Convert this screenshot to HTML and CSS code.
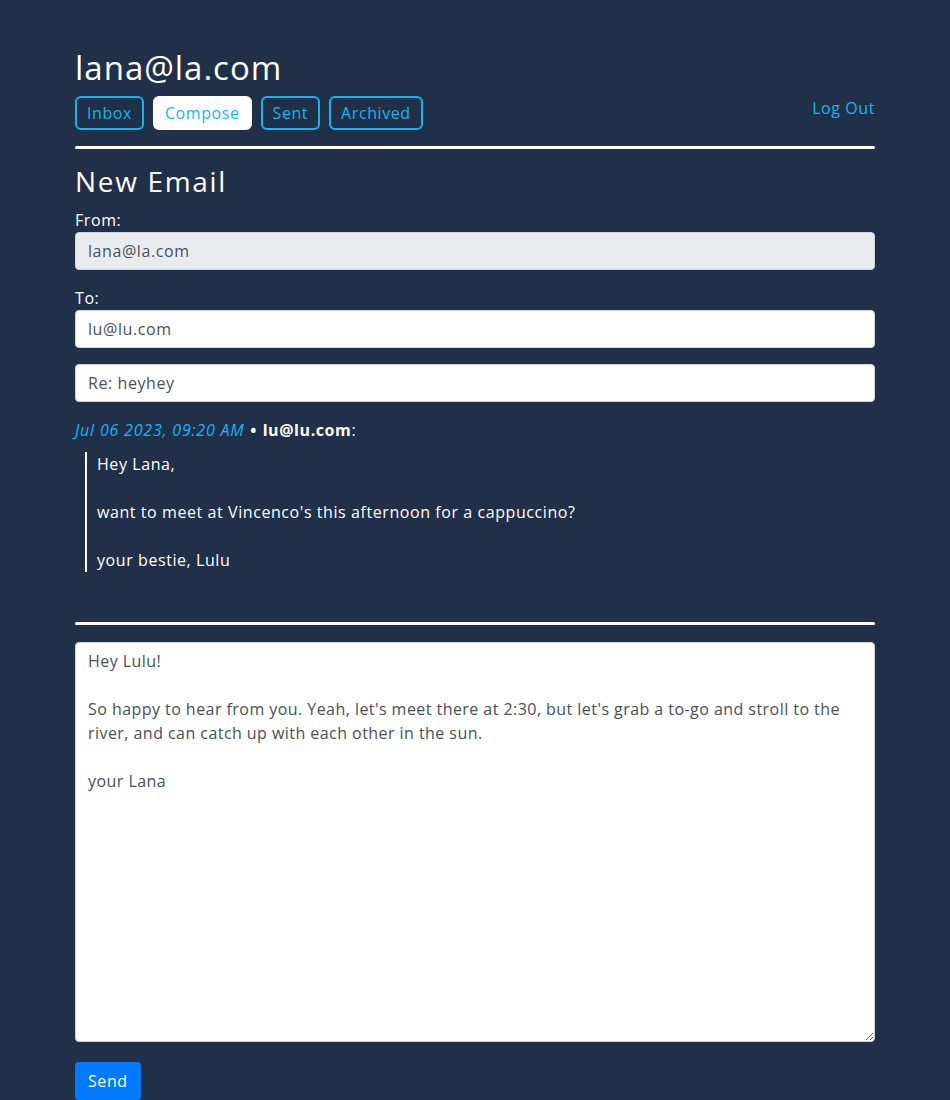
FILE: index.html
```html
<!DOCTYPE html>
<html lang="en">
<head>
<meta charset="utf-8">
<title>Compose</title>
<link rel="stylesheet" href="styles.css">
</head>
<body>
<div class="container">
  <h2 class="user">lana@la.com</h2>
  <div class="navrow">
    <nav class="tabs">
      <button class="tab">Inbox</button>
      <button class="tab active">Compose</button>
      <button class="tab">Sent</button>
      <button class="tab">Archived</button>
    </nav>
    <a class="logout" href="#">Log Out</a>
  </div>
  <hr class="rule">
  <h3 class="title">New Email</h3>
  <form class="form">
    <label class="label">From:</label>
    <input class="field disabled" value="lana@la.com" disabled>
    <label class="label gap">To:</label>
    <input class="field" value="lu@lu.com">
    <input class="field gap" value="Re: heyhey">
    <div class="meta"><span class="date">Jul 06 2023, 09:20 AM</span> <span class="dot">•</span> <strong>lu@lu.com</strong>:</div>
    <blockquote class="quote">Hey Lana,

want to meet at Vincenco's this afternoon for a cappuccino?

your bestie, Lulu</blockquote>
    <hr class="rule rule2">
    <textarea class="body">Hey Lulu!

So happy to hear from you. Yeah, let's meet there at 2:30, but let's grab a to-go and stroll to the river, and can catch up with each other in the sun.

your Lana</textarea>
    <button class="send" type="button">Send</button>
  </form>
</div>
</body>
</html>
```
FILE: styles.css
```css
* { box-sizing: border-box; }
html, body { margin: 0; }
body {
  background: #203049;
  color: #ffffff;
  font-family: "Open Sans", "DejaVu Sans", sans-serif;
  font-size: 16px;
  line-height: 1.5;
  letter-spacing: 0.036em;
}
.container {
  width: 800px;
  margin: 0 auto;
  padding-top: 46px;
}
.user {
  margin: 3px 0 9px;
  font-size: 33px;
  font-weight: 400;
  line-height: 38px;
  letter-spacing: 0.03em;
}
.navrow {
  display: flex;
  justify-content: space-between;
  align-items: flex-start;
}
.tabs { display: flex; gap: 9px; }
.tab {
  font: inherit;
  letter-spacing: inherit;
  height: 34px;
  padding: 0 10px;
  background: transparent;
  color: #14b6ee;
  border: 2px solid #14b6ee;
  border-radius: 6px;
  line-height: 30px;
}
.tab.active { background: #ffffff; border-color: #ffffff; }
.logout {
  color: #14b6ee;
  text-decoration: none;
  line-height: 24px;
}
.rule {
  border: 0;
  height: 3px;
  background: #ffffff;
  border-radius: 2px;
  margin: 16px 0 16px;
  opacity: 1;
}
.title {
  margin: 1px 0 9px;
  font-size: 28px;
  font-weight: 400;
  line-height: 1.2;
  letter-spacing: 0.06em;
}
.form { display: flex; flex-direction: column; }
.label { display: block; line-height: 24px; }
.gap { margin-top: 16px; }
.field {
  font: inherit;
  letter-spacing: inherit;
  height: 38px;
  padding: 6px 12px;
  border: 1px solid #ced4da;
  border-radius: 4px;
  background: #ffffff;
  color: #495057;
}
.field.disabled { background: #e9ecef; }
.meta { margin-top: 16px; line-height: 24px; }
.date { color: #14b6ee; font-style: italic; letter-spacing: 0.05em; }
.dot { font-size: 1.35em; line-height: 0; vertical-align: -2px; }
.meta strong { font-weight: 700; }
.quote {
  margin: 10px 0 0 10px;
  padding-left: 10px;
  border-left: 2px solid #ffffff;
  white-space: pre-wrap;
  line-height: 24px;
}
.rule2 { margin: 50px 0 17px; }
.body {
  font: inherit;
  letter-spacing: 0.028em;
  height: 400px;
  padding: 6px 12px;
  border: 1px solid #ced4da;
  border-radius: 4px;
  color: #495057;
  line-height: 24px;
  resize: vertical;
}
.send {
  align-self: flex-start;
  margin-top: 20px;
  font: inherit;
  letter-spacing: inherit;
  height: 38px;
  padding: 6px 13px;
  background: #007bff;
  color: #ffffff;
  border: 0;
  border-radius: 4px;
}
```
